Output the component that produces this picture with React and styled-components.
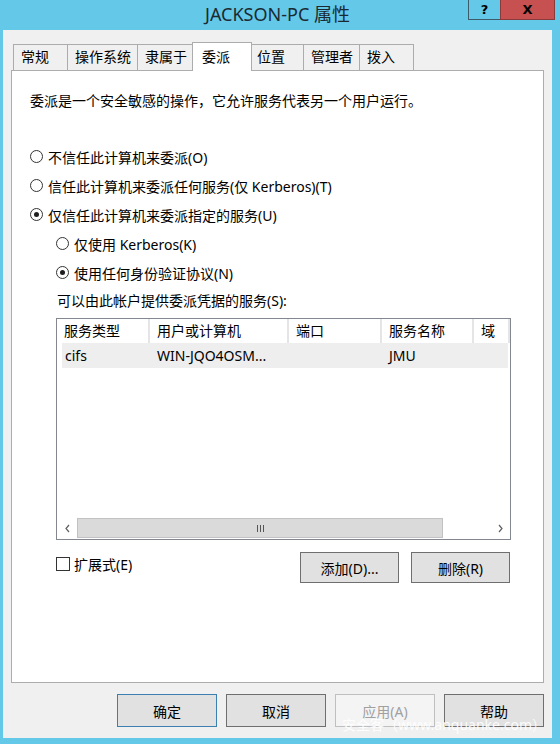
import React from 'react';
import styled, { createGlobalStyle } from 'styled-components';

const GlobalStyle = createGlobalStyle`
  html, body { margin: 0; padding: 0; }
  body {
    font-family: "Noto Sans", "Noto Sans CJK SC", sans-serif;
    font-size: 14px;
    color: #000;
  }
  #root { width: 560px; height: 744px; }
`;

const Window = styled.div`
  position: relative;
  width: 560px;
  height: 744px;
  box-sizing: border-box;
  padding: 0 8px 6px 3px;
  background: #64c8e9;
  display: flex;
  flex-direction: column;
`;

const TitleBar = styled.div`
  height: 30px;
  flex: none;
  display: grid;
  grid-template-columns: 1fr auto 1fr;
`;

const Title = styled.div`
  grid-column: 2;
  font-size: 18px;
  line-height: 29px;
  color: #1b2a31;
  white-space: nowrap;
`;

const Controls = styled.div`
  justify-self: end;
  display: flex;
  height: 20px;
  margin-right: -3px;
`;

const CtrlButton = styled.div`
  width: ${p => (p.close ? 55 : 33)}px;
  height: 20px;
  box-sizing: border-box;
  border: 1px solid ${p => (p.close ? '#8a3a38' : '#3b5c68')};
  border-top: none;
  margin-left: ${p => (p.close ? '-1px' : '0')};
  background: ${p => (p.close ? '#c75050' : 'transparent')};
  display: flex;
  align-items: center;
  justify-content: center;
  font-family: "DejaVu Sans", sans-serif;
  font-weight: bold;
  font-size: 13px;
  color: #000;
`;

const Client = styled.div`
  flex: 1;
  background: #f0f0f0;
  padding: 12px 8px 0;
  display: flex;
  flex-direction: column;
`;

const TabRow = styled.div`
  display: flex;
  align-items: flex-end;
  height: 29px;
  margin-bottom: -1px;
  padding-left: 2px;
`;

const Tab = styled.div`
  box-sizing: border-box;
  height: ${p => (p.active ? 29 : 27)}px;
  min-width: ${p => (p.active ? 60 : 55)}px;
  padding: ${p => (p.active ? '2px 6px 0 9px' : '0 6px 0 7px')};
  border: 1px solid #acacac;
  border-bottom: none;
  margin-left: ${p => (p.first ? '0' : p.active ? '-2px' : '-1px')};
  margin-right: ${p => (p.active ? '-2px' : '0')};
  background: ${p => (p.active ? '#fff' : '#f0f0f0')};
  position: ${p => (p.active ? 'relative' : 'static')};
  z-index: ${p => (p.active ? 1 : 'auto')};
  line-height: 24px;
  white-space: nowrap;
`;

const Panel = styled.div`
  flex: 1;
  background: #fff;
  border: 1px solid #adadad;
  padding: 20px 18px 0;
  display: flex;
  flex-direction: column;
`;

const Text = styled.div`
  line-height: 20px;
  white-space: nowrap;
`;

const RadioGroup = styled.div`
  margin-top: 31px;
  display: flex;
  flex-direction: column;
`;

const RadioRow = styled.div`
  height: 29px;
  display: flex;
  align-items: center;
  gap: 5px;
  padding-left: ${p => (p.sub ? 26 : 0)}px;
  white-space: nowrap;
`;

const RadioCircle = styled.span`
  width: 13px;
  height: 13px;
  box-sizing: border-box;
  border-radius: 50%;
  border: 1px solid #333;
  background: #fff;
  display: flex;
  align-items: center;
  justify-content: center;
  &::after {
    content: '';
    width: 5px;
    height: 5px;
    border-radius: 50%;
    background: ${p => (p.checked ? '#1f1f1f' : 'transparent')};
  }
`;

const ListLabel = styled(Text)`
  margin: 4px 0 0 27px;
`;

const List = styled.div`
  margin: 7px 0 0 26px;
  width: 455px;
  height: 222px;
  box-sizing: border-box;
  border: 1px solid #828790;
  display: flex;
  flex-direction: column;
`;

const HeaderRow = styled.div`
  display: grid;
  grid-template-columns: 93px 139px 93px 92px 1fr;
  height: 24px;
  overflow: hidden;
`;

const HeaderCell = styled.div`
  padding-left: 7px;
  border-right: 2px solid #e5e5e5;
  line-height: 23px;
  white-space: nowrap;
`;

const ListBody = styled.div`
  flex: 1;
  padding: 0 2px 0 5px;
`;

const DataRow = styled.div`
  display: grid;
  grid-template-columns: 88px 139px 93px 92px 1fr;
  height: 25px;
  background: #eeeeee;
`;

const DataCell = styled.div`
  padding-left: ${p => (p.first ? 3 : 7)}px;
  line-height: 25px;
  white-space: nowrap;
`;

const ScrollBar = styled.div`
  height: 20px;
  margin-bottom: 1px;
  display: flex;
  background: #fff;
`;

const ScrollArrow = styled.div`
  width: 20px;
  display: flex;
  align-items: center;
  justify-content: center;
`;

const ScrollTrack = styled.div`
  flex: 1;
  display: flex;
`;

const Thumb = styled.div`
  width: 366px;
  box-sizing: border-box;
  background: #dadada;
  border: 1px solid #c2c2c2;
  display: flex;
  align-items: center;
  justify-content: center;
  gap: 2px;
  span {
    width: 1px;
    height: 7px;
    background: #555;
  }
`;

const ActionRow = styled.div`
  margin: 12px 0 0 26px;
  width: 454px;
  display: flex;
  align-items: flex-start;
  gap: 12px;
`;

const CheckWrap = styled.label`
  flex: 1;
  margin-top: 2px;
  height: 20px;
  display: flex;
  align-items: center;
  gap: 4px;
  white-space: nowrap;
`;

const CheckBox = styled.span`
  width: 14px;
  height: 14px;
  box-sizing: border-box;
  border: 1px solid #333;
  background: #fff;
`;

const Button = styled.div`
  width: ${p => p.w || 99}px;
  height: ${p => p.h || 31}px;
  box-sizing: border-box;
  background: ${p => (p.disabled ? '#f4f4f4' : '#e1e1e1')};
  border: 1px solid ${p => (p.primary ? '#3c7fb1' : p.disabled ? '#bfbfbf' : '#6f6f6f')};
  color: ${p => (p.disabled ? '#a0a0a0' : '#000')};
  display: flex;
  align-items: center;
  justify-content: center;
  white-space: nowrap;
`;

const Footer = styled.div`
  height: 55px;
  flex: none;
  display: flex;
  align-items: center;
  justify-content: flex-end;
  gap: 9px;
`;

const Watermark = styled.div`
  position: absolute;
  right: 14px;
  top: 716px;
  font-size: 14px;
  line-height: 18px;
  color: rgba(255, 255, 255, 0.92);
  white-space: nowrap;
`;

const Chevron = ({ dir }) => (
  <svg width="7" height="9" viewBox="0 0 7 9">
    <path
      d={dir === 'left' ? 'M5 1 L2 4.5 L5 8' : 'M2 1 L5 4.5 L2 8'}
      fill="none"
      stroke="#606060"
      strokeWidth="1.2"
    />
  </svg>
);

const tabs = ['常规', '操作系统', '隶属于', '委派', '位置', '管理者', '拨入'];
const columns = ['服务类型', '用户或计算机', '端口', '服务名称', '域'];

export default function App() {
  return (
    <Window>
      <GlobalStyle />
      <TitleBar>
        <Title>JACKSON-PC 属性</Title>
        <Controls>
          <CtrlButton>?</CtrlButton>
          <CtrlButton close>X</CtrlButton>
        </Controls>
      </TitleBar>
      <Client>
        <TabRow>
          {tabs.map((t, i) => (
            <Tab key={t} first={i === 0} active={t === '委派'}>{t}</Tab>
          ))}
        </TabRow>
        <Panel>
          <Text>委派是一个安全敏感的操作，它允许服务代表另一个用户运行。</Text>
          <RadioGroup>
            <RadioRow><RadioCircle />不信任此计算机来委派(O)</RadioRow>
            <RadioRow><RadioCircle />信任此计算机来委派任何服务(仅 Kerberos)(T)</RadioRow>
            <RadioRow><RadioCircle checked />仅信任此计算机来委派指定的服务(U)</RadioRow>
            <RadioRow sub><RadioCircle />仅使用 Kerberos(K)</RadioRow>
            <RadioRow sub><RadioCircle checked />使用任何身份验证协议(N)</RadioRow>
          </RadioGroup>
          <ListLabel>可以由此帐户提供委派凭据的服务(S):</ListLabel>
          <List>
            <HeaderRow>
              {columns.map(c => <HeaderCell key={c}>{c}</HeaderCell>)}
            </HeaderRow>
            <ListBody>
              <DataRow>
                <DataCell first>cifs</DataCell>
                <DataCell>WIN-JQO4OSM...</DataCell>
                <DataCell />
                <DataCell>JMU</DataCell>
                <DataCell />
              </DataRow>
            </ListBody>
            <ScrollBar>
              <ScrollArrow><Chevron dir="left" /></ScrollArrow>
              <ScrollTrack>
                <Thumb><span /><span /><span /></Thumb>
              </ScrollTrack>
              <ScrollArrow><Chevron dir="right" /></ScrollArrow>
            </ScrollBar>
          </List>
          <ActionRow>
            <CheckWrap><CheckBox />扩展式(E)</CheckWrap>
            <Button>添加(D)...</Button>
            <Button>删除(R)</Button>
          </ActionRow>
        </Panel>
        <Footer>
          <Button primary w={100} h={33}>确定</Button>
          <Button w={100} h={33}>取消</Button>
          <Button disabled w={100} h={33}>应用(A)</Button>
          <Button w={100} h={33}>帮助</Button>
        </Footer>
      </Client>
      <Watermark>安全客（www.anquanke.com）</Watermark>
    </Window>
  );
}
